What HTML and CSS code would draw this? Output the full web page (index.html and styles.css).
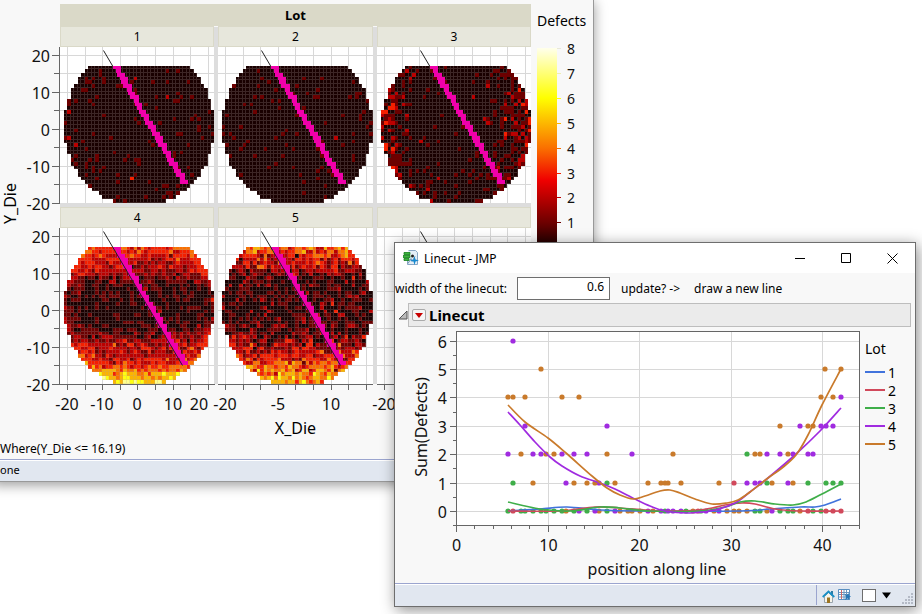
FILE: index.html
```html
<!DOCTYPE html>
<html lang="en">
  <head>
    <meta charset="UTF-8" />
    <title>Linecut - JMP</title>
    <link rel="stylesheet" href="styles.css">
    <script src="charts.js" defer></script>
  </head>
  <body>
    <main class="desktop">
      <section class="window graph-window">
        <div class="graph">
          <div class="y-title"><span>Y_Die</span></div>
          <div class="trellis">
            <div class="lot-header">Lot</div>
            <svg class="y-axis" data-row="0"></svg>
            <div class="facet"><h3>1</h3><svg class="wafer" data-lot="1"></svg></div>
            <div class="facet"><h3>2</h3><svg class="wafer" data-lot="2"></svg></div>
            <div class="facet"><h3>3</h3><svg class="wafer" data-lot="3"></svg></div>
            <svg class="y-axis" data-row="1"></svg>
            <div class="facet"><h3>4</h3><svg class="wafer" data-lot="4"></svg></div>
            <div class="facet"><h3>5</h3><svg class="wafer" data-lot="5"></svg></div>
            <div class="facet"><h3></h3><svg class="wafer" data-lot="6"></svg></div>
            <svg class="x-axis first" data-labels="-20,-10,0,10,20"></svg>
            <svg class="x-axis" data-labels="-20,-5,10"></svg>
            <svg class="x-axis" data-labels="-20"></svg>
            <div class="x-title">X_Die</div>
          </div>
          <div class="color-legend">
            <div class="legend-title">Defects</div>
            <svg id="colorBar" class="color-bar"></svg>
          </div>
        </div>
        <p class="where">Where(Y_Die &lt;= 16.19)</p>
        <footer class="status">one</footer>
      </section>

      <section class="window linecut-window">
        <header class="title-bar">
          <svg class="app-icon" width="16" height="16" viewBox="0 0 16 16">
            <path d="M5.500.5h7l2 2v12h-10V9" fill="#e4eef7" stroke="#88a6c4"/>
            <path d="M5 13.500l3-5 1 3 3-5" fill="none" stroke="#7595b5"/>
            <path d="M1 2.500h6v2H1zM0 5.500h7v2H0zM1 8.500h5v2H1z" fill="#3cb43c" stroke="#15801c" stroke-width=".8"/>
            <circle cx="9.500" cy="6" r="1.500" fill="#222"/>
            <path d="M11.500 6l1 3.500 3.500 1-3.500 1-1 3.500-1-3.500-3.500-1 3.500-1z" fill="#1689cf"/>
          </svg>
          <h1>Linecut - JMP</h1>
          <div class="controls">
            <button aria-label="Minimize"><svg width="11" height="11"><path d="M0 5.500h10"/></svg></button>
            <button aria-label="Maximize"><svg width="11" height="11"><path d="M.5.5h9v9h-9z"/></svg></button>
            <button aria-label="Close"><svg width="11" height="11"><path d="M.5.5l10 10M10.500.5l-10 10"/></svg></button>
          </div>
        </header>

        <div class="options">
          <label for="cutWidth">width of the linecut:</label>
          <input type="text" id="cutWidth" value="0.6" />
          <span>update? -&gt;</span>
          <button>draw a new line</button>
        </div>

        <div class="outline">
          <svg class="disclosure" width="10" height="10"><path d="M9 1v8H1z" fill="#bbb" stroke="#555"/></svg>
          <div class="outline-bar">
            <button class="red-triangle" aria-label="Linecut options"><svg width="10" height="6"><path d="M1 0h8l-4 5z" fill="#c80000"/></svg></button>
            <h2>Linecut</h2>
          </div>
        </div>

        <div class="plot">
          <svg id="linePlot" class="line-plot" viewBox="395 328 466 254"></svg>
          <div class="legend">
            <div class="legend-title">Lot</div>
            <ul>
              <li><i class="lot1"></i>1</li>
              <li><i class="lot2"></i>2</li>
              <li><i class="lot3"></i>3</li>
              <li><i class="lot4"></i>4</li>
              <li><i class="lot5"></i>5</li>
            </ul>
          </div>
        </div>

        <footer class="status tools">
          <button aria-label="Home window">
            <svg width="13" height="13" viewBox="0 0 13 13">
              <path d="M2.500 6.500v6h8v-6l-4-4z" fill="#f6f4ea" stroke="#9aa4ac"/>
              <path d="M9 1h2v4H9z" fill="#2c7ba5"/>
              <path d="M.7 7l5.800-5.500L12.300 7" fill="none" stroke="#198fc6" stroke-width="1.800"/>
              <path d="M5 7.500h3V13H5z" fill="#9c7420"/>
            </svg>
          </button>
          <button aria-label="Data table">
            <svg width="13" height="12" viewBox="0 0 13 12">
              <path d="M.5.5h11v10H.5z" fill="#fff" stroke="#5a8fc0"/>
              <path d="M1 3.500h10M1 5.500h10M1 8h10M6 1v9M8.500 1v9" stroke="#6d96bf"/>
              <path d="M3.500 1v9" stroke="#c66"/>
              <path d="M7 5l2 1 1.500-2 .5 2.500 2 1-2 1 .5 2.500-2-1.500L7 11l.8-2.500z" fill="#2877b5"/>
            </svg>
          </button>
          <input type="checkbox" aria-label="Arrange window" />
          <button class="drop" aria-label="Window menu"><svg width="9" height="7"><path d="M0 .5h9L4.500 6.500z"/></svg></button>
          <svg class="grip" width="12" height="12"><path d="M10 1h2M7 4h2M10 4h2M4 7h2M7 7h2M10 7h2M1 10h2M4 10h2M7 10h2M10 10h2" stroke="#b4bac6" stroke-width="2"/></svg>
        </footer>
      </section>
    </main>
  </body>
</html>
```

FILE: styles.css
```css
body {
  margin: 0;
  background: white;
  color: black;
  font-family: "Noto Sans", "Open Sans", sans-serif;
  font-size: 12px;
}

h1, h2, h3, p, ul {
  margin: 0;
  padding: 0;
  font-weight: normal;
}

button {
  padding: 0;
  border: 0;
  background: none;
  color: inherit;
  font: inherit;
}

svg {
  display: block;
}

svg text {
  font-size: 16px;
  fill: #111;
}

.desktop {
  position: relative;
  min-height: 100vh;
  overflow: hidden;
}

.window {
  position: absolute;
  box-sizing: border-box;
  display: flex;
  flex-direction: column;
  background: #f8f8f8;
  border: 1px solid #6e6e6e;
}

/* wafer map window */
.graph-window {
  left: -8px;
  top: -1px;
  width: 602px;
  border-color: #999;
  box-shadow: 0 3px 12px rgba(0, 0, 0, 0.4);
}

.graph {
  display: flex;
  padding-top: 4px;
}

.y-title {
  display: flex;
  width: 19px;
  padding: 175px 0 0 7px;
  box-sizing: border-box;
}

.y-title span {
  height: 50px;
  font-size: 16px;
  line-height: 20px;
  text-align: center;
  writing-mode: vertical-rl;
  transform: rotate(180deg);
}

.trellis {
  flex: 1;
  display: grid;
  grid-template-columns: 44px 1fr 1fr 1fr;
  column-gap: 4px;
  background: linear-gradient(#ddd, #ddd) 60px 23px / 460px 357px no-repeat;
}

.lot-header {
  grid-column: 2 / 5;
  height: 22px;
  line-height: 23px;
  background: #dad9c8;
  font-size: 13px;
  font-weight: bold;
  text-align: center;
}

.facet {
  border-top: 1px solid #dad9c8;
  border-bottom: 4px solid #ddd;
}

.y-axis[data-row="1"] ~ .facet {
  border-bottom: 0;
}

.facet h3 {
  box-sizing: border-box;
  height: 20px;
  line-height: 20px;
  background: #e7e7dc;
  border: 1px solid #dad9c8;
  border-top: 0;
  font-size: 12px;
  text-align: center;
}

.wafer {
  width: 100%;
  height: 156px;
  background: white;
}

.y-axis {
  width: 48px;
  height: 177px;
  overflow: visible;
}

.x-axis {
  width: 100%;
  height: 34px;
  overflow: visible;
}

.x-axis.first {
  grid-column: 2;
}

.x-title {
  grid-column: 2 / 5;
  font-size: 16px;
  line-height: 20px;
  text-align: center;
}

.color-legend {
  width: 62px;
  padding: 7px 0 0 6px;
  box-sizing: border-box;
}

.legend-title {
  font-size: 14px;
  line-height: 20px;
}

.color-bar {
  width: 50px;
  height: 220px;
  margin-top: 17px;
  overflow: visible;
}

.where {
  padding: 0 7px;
  margin: 2px 0;
  line-height: 17px;
}

.status {
  height: 21px;
  line-height: 20px;
  padding-left: 7px;
  background: #e1e7f0;
  border-top: 1px solid #9ba5cf;
  box-shadow: inset 0 1px white;
  font-size: 11px;
}

/* linecut window */
.linecut-window {
  left: 394px;
  top: 242px;
  width: 522px;
  box-shadow: 2px 3px 14px rgba(0, 0, 0, 0.45);
}

.title-bar {
  display: flex;
  align-items: center;
  height: 30px;
  padding-left: 8px;
  background: white;
}

.title-bar h1 {
  flex: 1;
  margin-left: 5px;
  font-size: 12px;
}

.controls {
  display: flex;
}

.controls button {
  display: flex;
  align-items: center;
  justify-content: center;
  width: 46px;
  height: 28px;
}

.controls path {
  fill: none;
  stroke: black;
}

.options {
  display: flex;
  align-items: center;
  height: 30px;
}

.options label {
  width: 122px;
  white-space: nowrap;
}

.options input {
  box-sizing: border-box;
  width: 93px;
  height: 23px;
  margin-right: 11px;
  padding: 0 5px 4px;
  border: 1px solid #6e6e6e;
  background: white;
  font: inherit;
  text-align: right;
}

.options button {
  margin-left: 14px;
}

.outline {
  display: flex;
  align-items: center;
  padding: 0 4px 1px 3px;
}

.outline-bar {
  flex: 1;
  display: flex;
  align-items: center;
  box-sizing: border-box;
  height: 24px;
  padding-left: 3px;
  background: #ebebeb;
  border: 1px solid #bdbdbd;
}

.outline-bar h2 {
  margin-left: 3px;
  font-size: 15px;
  font-weight: bold;
}

.red-triangle {
  box-sizing: border-box;
  width: 14px;
  height: 12px;
  padding: 3px 1px;
  background: #f5f5f5;
  border: 1px solid #aaa;
  border-radius: 2px;
}

.plot {
  display: flex;
  padding-bottom: 1px;
}

.line-plot {
  width: 466px;
  height: 254px;
}

.legend {
  padding: 11px 0 0 4px;
}

.legend ul {
  margin-top: 4px;
  list-style: none;
}

.legend li {
  display: flex;
  align-items: center;
  gap: 3px;
  height: 18px;
  font-size: 14px;
}

.legend i {
  width: 20px;
  height: 2px;
}

.lot1 { background: #4173dc; }
.lot2 { background: #d1495b; }
.lot3 { background: #3fae49; }
.lot4 { background: #a02be0; }
.lot5 { background: #c97a2b; }

.tools {
  display: flex;
  align-items: center;
  justify-content: flex-end;
  height: 22px;
}

.tools button:first-child {
  height: 20px;
  padding: 3px 0 0 5px;
  border-left: 1px solid #9ba5cf;
  box-sizing: border-box;
}

.tools button + button {
  margin-left: 3px;
}

.tools input {
  appearance: none;
  box-sizing: border-box;
  width: 14px;
  height: 13px;
  margin: 0 0 0 11px;
  border: 1px solid #6e6e6e;
  background: white;
}

.tools .drop {
  margin-left: 6px;
}

.grip {
  align-self: flex-end;
  margin: 0 2px 1px 10px;
}
```

FILE: charts.js
```js
const NS = "http://www.w3.org/2000/svg";
const heat = ["#190000", "#6c0000", "#bb0000", "#f42000", "#fa7000", "#fcb400", "#ffff10", "#ffff8c"];
const lotColors = { 1: "#4173dc", 2: "#d1495b", 3: "#3fae49", 4: "#a02be0", 5: "#c97a2b" };

function add(parent, name, attrs, text) {
  const el = document.createElementNS(NS, name);
  for (const key in attrs) el.setAttribute(key, attrs[key]);
  if (text !== undefined) el.textContent = text;
  parent.appendChild(el);
  return el;
}

function line(svg, x1, y1, x2, y2, stroke) {
  return add(svg, "path", { d: `M${x1} ${y1}L${x2} ${y2}`, stroke: stroke, fill: "none" });
}

// wafer scale: die units to pixels
const px = x => Math.round(77.4 + x * 3.515);
const py = y => Math.round(81.5 - y * 3.7);

function makeRandom(seed) {
  return function () {
    seed = (seed + 0x6d2b79f5) | 0;
    let t = Math.imul(seed ^ (seed >>> 15), 1 | seed);
    t = (t + Math.imul(t ^ (t >>> 7), 61 | t)) ^ t;
    return ((t ^ (t >>> 14)) >>> 0) / 4294967296;
  };
}

function poisson(mean, random) {
  const limit = Math.exp(-mean);
  let k = 0;
  let p = random();
  while (p > limit) {
    k++;
    p *= random();
  }
  return k;
}

function interpolate(table, v) {
  for (let i = 1; i < table.length; i++) {
    const [x0, y0] = table[i - 1], [x1, y1] = table[i];
    if (v <= x1) return y0 + (y1 - y0) * (v - x0) / (x1 - x0);
  }
  return table[table.length - 1][1];
}

// mean defects by die row, bottom to top
const rowMeans = {
  4: [[-20, 5.1], [-18, 4.5], [-16, 3], [-14, 2.2], [-10, 1.9], [-8, 1.3], [-6, 0.5], [-4, 0.1], [4, 0.1], [6, 0.4], [8, 1], [10, 1.8], [13, 2.2], [16, 2.8]],
  5: [[-20, 4.6], [-17, 3.9], [-15, 3.2], [-12, 2], [-9, 1.2], [-5, 0.5], [0, 0.2], [6, 0.2], [9, 0.8], [11, 1.7], [13, 2.4], [16, 3.7]]
};

function defectCount(lot, dx, dy, random) {
  const r = Math.hypot(dx, dy) / 21.5;
  if (lot === 1) return poisson(0.08 + 0.1 * r ** 8, random);
  if (lot === 2) return poisson(0.06, random);
  if (lot === 3) return Math.min(3, poisson(0.06 + 1.3 * Math.abs(dx / 21) ** 2 * r ** 2, random));
  let mean = interpolate(rowMeans[lot], dy);
  if (lot === 4) mean += 1.2 * r ** 10;
  const noise = (random() + random() + random() - 1.5) * (lot === 4 ? 1.2 : 1.8);
  return Math.max(0, Math.round(mean + noise));
}

function drawWafer(svg) {
  const lot = Number(svg.dataset.lot);
  const random = makeRandom(lot * 977);
  for (let v = -20; v <= 20; v += 5) {
    line(svg, px(v) + 0.5, 0, px(v) + 0.5, 156, "#d8d8d8");
    line(svg, 0, py(v) + 0.5, 160, py(v) + 0.5, "#d8d8d8");
  }
  const cut = { d: "M43.500 3.500L122.500 137.500", stroke: "#222", fill: "none" };
  if (lot < 4) add(svg, "path", cut);
  if (lot < 6) {
    const dies = add(svg, "g", { "shape-rendering": "crispEdges" });
    const marks = [];
    for (let dy = 16; dy >= -20; dy--) {
      for (let dx = -21; dx <= 21; dx++) {
        if (dx * dx + dy * dy > 462) continue;
        const x = px(dx), y = py(dy + 1);
        const w = px(dx + 1) - x, h = py(dy) - y;
        const count = Math.min(7, defectCount(lot, dx, dy, random));
        add(dies, "rect", { x: x, y: y, width: w, height: h, fill: heat[count] });
        if (count < 1 || lot > 3) {
          add(dies, "path", { d: `M${x} ${y + h - 0.5}h${w}M${x + w - 0.5} ${y}v${h}`, stroke: "#b0a0a0", fill: "none", "stroke-opacity": 0.24 });
        }
        // dies beside the cut line, two pixels past it on the right
        const lineX = 43.5 + (y + 2 - 3.5) * 79 / 134;
        if (y < 136 && Math.abs(x + w / 2 - lineX - 2) < 3) marks.push([Math.max(x, Math.round(lineX) - 1), y, 5, h]);
      }
    }
    marks.forEach(m => add(dies, "rect", { x: m[0], y: m[1], width: m[2], height: m[3], fill: "#f000aa" }));
  }
  if (lot > 3) add(svg, "path", cut);
}

function drawYAxis(svg) {
  line(svg, 47.5, 21, 47.5, 177, "#666");
  for (let v = -20; v <= 20; v += 5) {
    const y = 21 + py(v) + 0.5;
    line(svg, v % 10 ? 42 : 40, y, 48, y, "#666");
    if (v % 10 === 0) add(svg, "text", { x: 38, y: y + 6, "text-anchor": "end" }, v);
  }
}

function drawXAxis(svg) {
  line(svg, 0, 0.5, 155, 0.5, "#666");
  for (let v = -20; v <= 20; v += 5) line(svg, px(v) + 0.5, 0, px(v) + 0.5, 6, "#666");
  svg.dataset.labels.split(",").forEach(v => {
    // the last label is held inside the panel
    const x = Math.min(px(Number(v)), 139);
    add(svg, "text", { x: x, y: 26, "text-anchor": "middle" }, v);
  });
}

function drawColorBar(svg) {
  const defs = add(svg, "defs", {});
  const grad = add(defs, "linearGradient", { id: "hot", x1: 0, y1: 0, x2: 0, y2: 1 });
  [[0, "#ffffec"], [0.25, "#ffff00"], [0.5, "#fa7000"], [0.66, "#f00000"], [0.875, "#6c0000"], [1, "#120000"]]
    .forEach(s => add(grad, "stop", { offset: s[0], "stop-color": s[1] }));
  add(svg, "rect", { x: 0, y: 0, width: 20, height: 200, fill: "url(#hot)" });
  for (let v = 1; v <= 8; v++) {
    const y = Math.round((8 - v) * 24.9) + 0.5;
    const color = ["", "#6c0000", "#bb0000", "#f42000", "#fa7000", "#fcb400", "#ffff10", "#eeeeb0", "#e8e8d8"][v];
    line(svg, 20, y, 24, y, color);
    const t = add(svg, "text", { x: 30, y: y + 5 }, v);
    t.style.fontSize = "14px";
  }
}

const points = [
  [5, 5, [541, 825, 841]],
  [5, 4, [508, 513, 525, 562, 579, 821, 833]],
  [4, 6, [513]],
  [4, 4, [841]],
  [4, 3, [525, 607, 800, 821, 826, 833]],
  [5, 3, [780, 808, 813]],
  [4, 2, [508, 533, 541, 562, 574, 587, 632, 767, 780, 793, 808, 813]],
  [5, 2, [521, 546, 554, 607, 673, 755, 760, 788]],
  [3, 2, [747]],
  [4, 1, [566, 599, 747, 755, 760, 788]],
  [5, 1, [533, 574, 587, 595, 615, 648, 661, 665, 668, 681, 719, 772, 793]],
  [3, 1, [513, 607, 767, 808, 826, 833, 841]],
  [2, 1, [734]],
  [3, 0, [508, 521, 525, 533, 541, 546, 554, 562, 574, 587, 607, 665, 686, 701, 755, 760, 780, 788, 793, 813, 821]],
  [5, 0, [566, 599, 620, 628, 632, 640, 653, 693, 714, 727, 734, 739, 747, 767, 800]],
  [4, 0, [579, 595, 615, 648, 661, 668, 673, 681, 706, 719, 772]],
  [2, 0, [513, 698, 808, 826, 833, 841]]
];

const curves = {
  1: [[508, 511], [540, 509], [567, 507], [600, 510], [640, 511], [740, 511], [770, 509], [800, 507], [815, 507], [825, 505], [841, 499]],
  2: [[508, 511], [560, 511], [595, 507], [620, 508], [660, 511], [700, 510], [725, 505], [742, 503], [755, 504], [775, 509], [800, 511], [841, 511]],
  3: [[508, 502], [540, 509], [570, 511], [600, 507], [620, 508], [650, 511], [700, 511], [725, 507], [740, 502], [755, 501], [775, 504], [793, 505], [806, 502], [822, 494], [841, 484]],
  4: [[508, 412], [520, 425], [535, 442], [550, 457], [562, 466], [580, 476], [600, 483], [615, 489], [635, 499], [650, 506], [665, 511], [690, 513], [715, 510], [735, 503], [750, 492], [768, 478], [796, 454], [820, 431], [841, 408]],
  5: [[508, 405], [525, 422], [548, 438], [566, 453], [592, 476], [607, 488], [620, 495], [633, 499], [645, 496], [660, 491], [670, 490], [680, 493], [695, 499], [712, 504], [727, 503], [738, 500], [750, 492], [768, 478], [782, 468], [796, 455], [808, 435], [822, 405], [841, 369]]
};

function smooth(pts) {
  let d = `M${pts[0]}`;
  for (let i = 0; i < pts.length - 1; i++) {
    const a = pts[i - 1] || pts[i], b = pts[i], c = pts[i + 1], e = pts[i + 2] || c;
    d += `C${b[0] + (c[0] - a[0]) / 6} ${b[1] + (c[1] - a[1]) / 6} ${c[0] - (e[0] - b[0]) / 6} ${c[1] - (e[1] - b[1]) / 6} ${c}`;
  }
  return d;
}

function drawLinePlot(svg) {
  const sx = v => Math.round(456 + v * 9.15) + 0.5;
  const sy = v => Math.round(511 - v * 28.4) + 0.5;
  add(svg, "rect", { x: 456.5, y: 331.5, width: 403, height: 194, fill: "#fff" });
  for (let v = 10; v <= 40; v += 10) line(svg, sx(v), 332, sx(v), 525, "#d8d8d8");
  for (let v = 0; v <= 6; v++) line(svg, 457, sy(v), 859, sy(v), "#d8d8d8");
  add(svg, "rect", { x: 456.5, y: 331.5, width: 403, height: 194, fill: "none", stroke: "#666" });
  for (let v = 0; v <= 44; v += 2) {
    line(svg, sx(v), 525, sx(v), v % 10 ? 529 : 532, "#666");
    if (v % 10 === 0) add(svg, "text", { x: sx(v), y: 551, "text-anchor": "middle" }, v);
  }
  for (let v = -0.5; v <= 6; v += 0.5) {
    line(svg, v % 1 ? 453 : 450, sy(v), 456, sy(v), "#666");
    if (v % 1 === 0) add(svg, "text", { x: 447, y: sy(v) + 6, "text-anchor": "end" }, v);
  }
  points.forEach(([lot, y, xs]) => xs.forEach(x => {
    add(svg, "circle", { cx: x, cy: sy(y) - 0.5, r: 2.6, fill: lotColors[lot] });
  }));
  for (const lot in curves) {
    add(svg, "path", { d: smooth(curves[lot]), fill: "none", stroke: lotColors[lot], "stroke-width": 1.7 });
  }
  add(svg, "text", { x: 657, y: 575, "text-anchor": "middle" }, "position along line");
  add(svg, "text", { transform: "translate(427 427) rotate(-90)", "text-anchor": "middle" }, "Sum(Defects)");
}

document.querySelectorAll(".wafer").forEach(drawWafer);
document.querySelectorAll(".y-axis").forEach(drawYAxis);
document.querySelectorAll(".x-axis").forEach(drawXAxis);
drawColorBar(document.getElementById("colorBar"));
drawLinePlot(document.getElementById("linePlot"));
```
